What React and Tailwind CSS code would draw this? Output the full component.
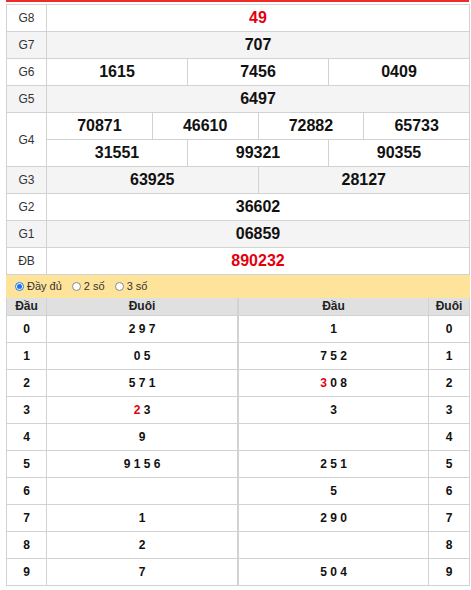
const prizes = [
  { label: "G8", cells: [{ v: "49", span: 12, red: true }] },
  { label: "G7", cells: [{ v: "707", span: 12 }] },
  {
    label: "G6",
    cells: [
      { v: "1615", span: 4 },
      { v: "7456", span: 4 },
      { v: "0409", span: 4 },
    ],
  },
  { label: "G5", cells: [{ v: "6497", span: 12 }] },
];

const loto = [
  { d: "0", left: [["2 9 7"]], right: [["1"]] },
  { d: "1", left: [["0 5"]], right: [["7 5 2"]] },
  { d: "2", left: [["5 7 1"]], right: [["3", true], [" 0 8"]] },
  { d: "3", left: [["2", true], [" 3"]], right: [["3"]] },
  { d: "4", left: [["9"]], right: [] },
  { d: "5", left: [["9 1 5 6"]], right: [["2 5 1"]] },
  { d: "6", left: [], right: [["5"]] },
  { d: "7", left: [["1"]], right: [["2 9 0"]] },
  { d: "8", left: [["2"]], right: [] },
  { d: "9", left: [["7"]], right: [["5 0 4"]] },
];

const cellBorder = "border border-[#d2d2d2]";

const Num = ({ v, red }) => (
  <span className={red ? "text-[#e3000f]" : "text-[#111]"}>{v}</span>
);

const Parts = ({ parts }) =>
  parts.map(([t, red], i) => (
    <span key={i} className={red ? "text-[#e3000f]" : "text-[#111]"}>
      {t}
    </span>
  ));

const PrizeRow = ({ label, cells, gray }) => (
  <tr className={gray ? "bg-[#f4f4f4]" : "bg-white"}>
    <td className={`${cellBorder} h-[27px] text-center text-[12px] text-[#333]`}>
      {label}
    </td>
    {cells.map((c, i) => (
      <td
        key={i}
        colSpan={c.span}
        className={`${cellBorder} h-[27px] text-center text-[16px] font-bold p-0`}
      >
        <Num v={c.v} red={c.red} />
      </td>
    ))}
  </tr>
);

const Radio = ({ checked, label }) => (
  <label className="flex items-center gap-[3px] mr-[10px]">
    <span
      className={`w-[9px] h-[9px] rounded-full border flex items-center justify-center ${
        checked ? "border-[#1a73e8] bg-white" : "border-[#8a8a8a] bg-white"
      }`}
    >
      {checked && <span className="w-[5px] h-[5px] rounded-full bg-[#1a73e8]" />}
    </span>
    <span className="text-[11px] text-[#333]">{label}</span>
  </label>
);

const headCell =
  "h-[17px] p-0 leading-[15px] text-[12px] font-bold text-[#222] border-r border-[#d2d2d2]";

export default function App() {
  return (
    <div
      className="bg-white w-[471px] h-[590px]"
      style={{ fontFamily: '"Liberation Sans", Arial, sans-serif' }}
    >
      <div className="ml-[6px] w-[463px] h-[2px] bg-[#ee2b2b]" />
      <table className="ml-[6px] mt-[2px] w-[464px] table-fixed border-collapse">
        <colgroup>
          <col className="w-[40px]" />
          {Array.from({ length: 12 }).map((_, i) => (
            <col key={i} />
          ))}
        </colgroup>
        <tbody>
          {prizes.map((p, i) => (
            <PrizeRow key={p.label} {...p} gray={i % 2 === 1} />
          ))}
          <tr className="bg-white">
            <td
              rowSpan={2}
              className={`${cellBorder} text-center text-[12px] text-[#333]`}
            >
              G4
            </td>
            {["70871", "46610", "72882", "65733"].map((v) => (
              <td
                key={v}
                colSpan={3}
                className={`${cellBorder} h-[27px] text-center text-[16px] font-bold p-0`}
              >
                <Num v={v} />
              </td>
            ))}
          </tr>
          <tr className="bg-white">
            {["31551", "99321", "90355"].map((v) => (
              <td
                key={v}
                colSpan={4}
                className={`${cellBorder} h-[27px] text-center text-[16px] font-bold p-0`}
              >
                <Num v={v} />
              </td>
            ))}
          </tr>
          <PrizeRow
            label="G3"
            gray
            cells={[
              { v: "63925", span: 6 },
              { v: "28127", span: 6 },
            ]}
          />
          <PrizeRow label="G2" cells={[{ v: "36602", span: 12 }]} />
          <PrizeRow label="G1" gray cells={[{ v: "06859", span: 12 }]} />
          <PrizeRow label="ĐB" cells={[{ v: "890232", span: 12, red: true }]} />
        </tbody>
      </table>

      <div className="ml-[6px] w-[464px] h-[23px] bg-[#fee49a] flex items-center pl-[9px]">
        <Radio checked label="Đầy đủ" />
        <Radio label="2 số" />
        <Radio label="3 số" />
      </div>

      <div className="ml-[6px] w-[464px] flex">
        <table className="w-[232px] table-fixed border-collapse">
          <colgroup>
            <col className="w-[40px]" />
            <col />
          </colgroup>
          <thead>
            <tr className="bg-[#e0e0e0]">
              <th className={`${headCell} border-l`}>Đầu</th>
              <th className={headCell}>Đuôi</th>
            </tr>
          </thead>
          <tbody>
            {loto.map((r) => (
              <tr key={r.d}>
                <td className={`${cellBorder} h-[27px] p-0 text-center text-[12px] font-bold text-[#111]`}>
                  {r.d}
                </td>
                <td className={`${cellBorder} h-[27px] p-0 text-center text-[12px] font-bold`}>
                  <Parts parts={r.left} />
                </td>
              </tr>
            ))}
          </tbody>
        </table>
        <table className="w-[232px] table-fixed border-collapse">
          <colgroup>
            <col />
            <col className="w-[41px]" />
          </colgroup>
          <thead>
            <tr className="bg-[#e0e0e0]">
              <th className={`${headCell} border-l`}>Đầu</th>
              <th className={headCell}>Đuôi</th>
            </tr>
          </thead>
          <tbody>
            {loto.map((r) => (
              <tr key={r.d}>
                <td className={`${cellBorder} h-[27px] p-0 text-center text-[12px] font-bold`}>
                  <Parts parts={r.right} />
                </td>
                <td className={`${cellBorder} h-[27px] p-0 text-center text-[12px] font-bold text-[#111]`}>
                  {r.d}
                </td>
              </tr>
            ))}
          </tbody>
        </table>
      </div>
    </div>
  );
}
